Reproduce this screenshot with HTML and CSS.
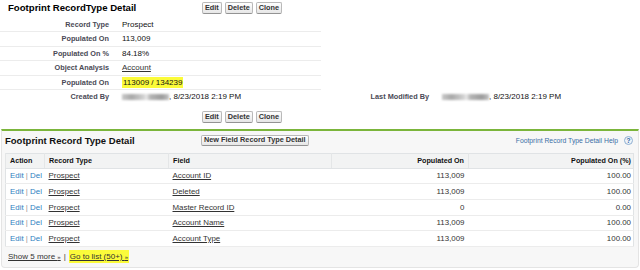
FILE: index.html
```html
<!DOCTYPE html>
<html>
<head>
<meta charset="utf-8">
<link rel="stylesheet" href="styles.css">
</head>
<body>
<div class="detail">
  <div class="pb-head">
    <h2 class="pb-title">Footprint RecordType Detail</h2>
    <div class="btns">
      <button class="btn">Edit</button><button class="btn">Delete</button><button class="btn">Clone</button>
    </div>
  </div>
  <div class="field-row"><div class="lbl">Record Type</div><div class="val">Prospect</div></div>
  <div class="field-row"><div class="lbl">Populated On</div><div class="val">113,009</div></div>
  <div class="field-row"><div class="lbl">Populated On %</div><div class="val">84.18%</div></div>
  <div class="field-row"><div class="lbl">Object Analysis</div><div class="val"><a class="dl">Account</a></div></div>
  <div class="field-row"><div class="lbl">Populated On</div><div class="val"><span class="hl">113009 / 134239</span></div></div>
  <div class="field-row wide">
    <div class="lbl">Created By</div><div class="val"><span class="blur"></span>, 8/23/2018 2:19 PM</div>
    <div class="lbl">Last Modified By</div><div class="val"><span class="blur"></span>, 8/23/2018 2:19 PM</div>
  </div>
  <div class="btns bottom">
    <button class="btn">Edit</button><button class="btn">Delete</button><button class="btn">Clone</button>
  </div>
</div>

<div class="related">
  <div class="r-head">
    <h3 class="r-title">Footprint Record Type Detail</h3>
    <button class="btn small">New Field Record Type Detail</button>
    <a class="help">Footprint Record Type Detail Help <span class="help-icon">?</span></a>
  </div>
  <table class="list">
    <thead>
      <tr>
        <th class="c-action">Action</th>
        <th class="c-type">Record Type</th>
        <th class="c-field">Field</th>
        <th class="c-num">Populated On</th>
        <th class="c-pct">Populated On (%)</th>
      </tr>
    </thead>
    <tbody>
      <tr><td class="c-action"><a class="act">Edit</a> <span class="sep">|</span> <a class="act">Del</a></td><td><a class="dl">Prospect</a></td><td><a class="dl">Account ID</a></td><td class="c-num">113,009</td><td class="c-pct">100.00</td></tr>
      <tr><td class="c-action"><a class="act">Edit</a> <span class="sep">|</span> <a class="act">Del</a></td><td><a class="dl">Prospect</a></td><td><a class="dl">Deleted</a></td><td class="c-num">113,009</td><td class="c-pct">100.00</td></tr>
      <tr><td class="c-action"><a class="act">Edit</a> <span class="sep">|</span> <a class="act">Del</a></td><td><a class="dl">Prospect</a></td><td><a class="dl">Master Record ID</a></td><td class="c-num">0</td><td class="c-pct">0.00</td></tr>
      <tr><td class="c-action"><a class="act">Edit</a> <span class="sep">|</span> <a class="act">Del</a></td><td><a class="dl">Prospect</a></td><td><a class="dl">Account Name</a></td><td class="c-num">113,009</td><td class="c-pct">100.00</td></tr>
      <tr><td class="c-action"><a class="act">Edit</a> <span class="sep">|</span> <a class="act">Del</a></td><td><a class="dl">Prospect</a></td><td><a class="dl">Account Type</a></td><td class="c-num">113,009</td><td class="c-pct">100.00</td></tr>
    </tbody>
  </table>
  <div class="more">
    <a class="dl">Show 5 more <span class="raq">»</span></a> <span class="sep2">|</span> <a class="dl hl2">Go to list (50+) <span class="raq">»</span></a>
  </div>
</div>
</body>
</html>
```

FILE: styles.css
```css
* { box-sizing: border-box; }

body {
  margin: 0;
  width: 640px;
  height: 270px;
  overflow: hidden;
  background: #fff;
  color: #222;
  font-family: "Liberation Sans", Arial, sans-serif;
}

.pb-head {
  display: flex;
  height: 17.5px;
  padding: 2px 0 0 8px;
}

.pb-title {
  margin: 0;
  width: 194px;
  font-size: 9.6px;
  line-height: 11px;
  font-weight: bold;
  color: #000;
}

.btns {
  display: flex;
  gap: 3px;
}

.btn {
  height: 12px;
  padding: 0 2px;
  font-family: "Liberation Sans", Arial, sans-serif;
  font-weight: bold;
  font-size: 7.3px;
  line-height: 10px;
  color: #333;
  border: 1px solid #b9b9b9;
  border-bottom-color: #939393;
  border-radius: 2px;
  background: linear-gradient(#fff, #e6e6e6);
}

.btn.small {
  height: 10.5px;
  line-height: 8.5px;
  padding: 0 2px;
}

.field-row {
  display: grid;
  grid-template-columns: 116px 205px;
  height: 14.5px;
}

.field-row .lbl,
.field-row .val {
  display: flex;
  align-items: center;
  border-bottom: 1px solid #ececec;
}

.field-row .lbl {
  justify-content: flex-end;
  padding-right: 7px;
  font-size: 7.3px;
  font-weight: bold;
  color: #4a4a56;
}

.field-row .val {
  padding-left: 6px;
  font-size: 8px;
  color: #111;
}

.field-row.wide {
  grid-template-columns: 116px 204px 116px 1fr;
  height: 13px;
}

.field-row.wide .lbl,
.field-row.wide .val {
  border-bottom: none;
}

.dl {
  color: #333;
  text-decoration: underline;
}

.hl {
  background: #fbfb3a;
  padding: 1px 1px;
}

.blur {
  display: inline-block;
  width: 47px;
  height: 6px;
  background: linear-gradient(90deg, #c9c9c9 0, #a8a8a8 20%, #cfcfcf 45%, #e8e8e8 52%, #b5b5b5 60%, #9c9c9c 85%, #c4c4c4 100%);
  filter: blur(0.8px);
}

.btns.bottom {
  margin-top: 7.5px;
  padding-left: 202px;
}

.related {
  margin: 6px 1px 0 1px;
  height: 139px;
  border: 1px solid #e4e4e4;
  border-top: 2px solid #7bb53b;
  border-radius: 0 0 4px 4px;
  background: #f7f7f7;
}

.r-head {
  display: flex;
  align-items: center;
  height: 20px;
  padding-left: 3px;
}

.r-title {
  margin: 0;
  width: 196px;
  font-size: 9.5px;
  font-weight: bold;
  color: #111;
}

.help {
  margin-left: auto;
  display: flex;
  align-items: center;
  font-size: 6.8px;
  color: #3b6fa6;
}

.help-icon {
  display: inline-flex;
  align-items: center;
  justify-content: center;
  width: 9px;
  height: 9px;
  margin: 0 5px 0 6px;
  border: 1px solid #8fb0d2;
  border-radius: 50%;
  background: #eef3f9;
  color: #2a64a4;
  font-size: 6.5px;
  font-weight: bold;
}

.list {
  margin: 2px 4px 0 3px;
  width: 629px;
  border-collapse: collapse;
  border: 1px solid #e0e3e5;
  background: #fff;
  table-layout: fixed;
}

.list th {
  height: 15px;
  padding: 0 4px;
  background: #f2f3f3;
  border-bottom: 1px solid #e0e3e5;
  border-left: 1px solid #e4e6e7;
  font-size: 7.2px;
  font-weight: bold;
  color: #111;
  text-align: left;
}

.list td {
  height: 15.7px;
  padding: 0 4px;
  border-bottom: 1px solid #ececec;
  font-size: 7.9px;
  color: #333;
  white-space: nowrap;
}

.list .c-action { width: 39px; }
.list .c-type { width: 124px; }
.list .c-field { width: 163px; }
.list .c-num { width: 137px; text-align: right; }
.list .c-pct { text-align: right; padding-right: 2px; }

.act {
  color: #2f7fc1;
}

.sep {
  color: #999;
}

.more {
  display: flex;
  align-items: center;
  gap: 3px;
  height: 19px;
  padding-left: 6px;
  font-size: 8px;
  color: #333;
}

.raq {
  font-size: 6px;
}

.hl2 {
  background: #fbfb3a;
  padding: 2px 1px;
}
```
